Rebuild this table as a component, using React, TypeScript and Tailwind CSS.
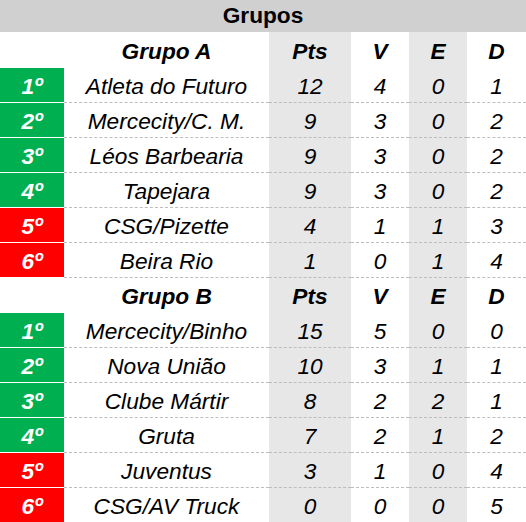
import React from "react";

type Row = { pos: string; team: string; pts: number; v: number; e: number; d: number; win: boolean };

const groupA: Row[] = [
  { pos: "1º", team: "Atleta do Futuro", pts: 12, v: 4, e: 0, d: 1, win: true },
  { pos: "2º", team: "Mercecity/C. M.", pts: 9, v: 3, e: 0, d: 2, win: true },
  { pos: "3º", team: "Léos Barbearia", pts: 9, v: 3, e: 0, d: 2, win: true },
  { pos: "4º", team: "Tapejara", pts: 9, v: 3, e: 0, d: 2, win: true },
  { pos: "5º", team: "CSG/Pizette", pts: 4, v: 1, e: 1, d: 3, win: false },
  { pos: "6º", team: "Beira Rio", pts: 1, v: 0, e: 1, d: 4, win: false },
];

const groupB: Row[] = [
  { pos: "1º", team: "Mercecity/Binho", pts: 15, v: 5, e: 0, d: 0, win: true },
  { pos: "2º", team: "Nova União", pts: 10, v: 3, e: 1, d: 1, win: true },
  { pos: "3º", team: "Clube Mártir", pts: 8, v: 2, e: 2, d: 1, win: true },
  { pos: "4º", team: "Gruta", pts: 7, v: 2, e: 1, d: 2, win: true },
  { pos: "5º", team: "Juventus", pts: 3, v: 1, e: 0, d: 4, win: false },
  { pos: "6º", team: "CSG/AV Truck", pts: 0, v: 0, e: 0, d: 5, win: false },
];

const grid = "grid grid-cols-[64px_205px_82px_58px_58px_59px]";

function Header({ name, tall }: { name: string; tall?: boolean }) {
  const c = "flex items-end justify-center pb-[5px]";
  return (
    <div className={`${grid} ${tall ? "h-[36px]" : "h-[35px]"} font-bold italic`}>
      <div className="bg-white" />
      <div className={c}>{name}</div>
      <div className={`${c} bg-[#e7e7e7]`}>Pts</div>
      <div className={c}>V</div>
      <div className={`${c} bg-[#e7e7e7]`}>E</div>
      <div className={c}>D</div>
    </div>
  );
}

function TeamRow({ r }: { r: Row }) {
  const cell = "flex items-end justify-center pb-[4px] border-b border-dashed border-[#bdbdbd]";
  return (
    <div className={`${grid} h-[35px] italic`}>
      <div
        className={`flex items-end justify-center pb-[4px] border-b border-white font-bold text-white ${
          r.win ? "bg-[#00b050]" : "bg-[#ff0000]"
        }`}
      >
        {r.pos}
      </div>
      <div className={cell}>{r.team}</div>
      <div className={`${cell} bg-[#e7e7e7]`}>{r.pts}</div>
      <div className={cell}>{r.v}</div>
      <div className={`${cell} bg-[#e7e7e7]`}>{r.e}</div>
      <div className={cell}>{r.d}</div>
    </div>
  );
}

export default function App() {
  return (
    <div
      className="w-[526px] h-[522px] overflow-hidden bg-white text-black text-[22.7px] leading-none"
      style={{ fontFamily: '"Liberation Sans", Arial, sans-serif' }}
    >
      <div className="h-[32px] bg-[#d0d0d0] flex items-end justify-center pb-[5px] font-bold">Grupos</div>
      <Header name="Grupo A" tall />
      {groupA.map((r) => (
        <TeamRow key={"a" + r.pos} r={r} />
      ))}
      <Header name="Grupo B" />
      {groupB.map((r) => (
        <TeamRow key={"b" + r.pos} r={r} />
      ))}
    </div>
  );
}
